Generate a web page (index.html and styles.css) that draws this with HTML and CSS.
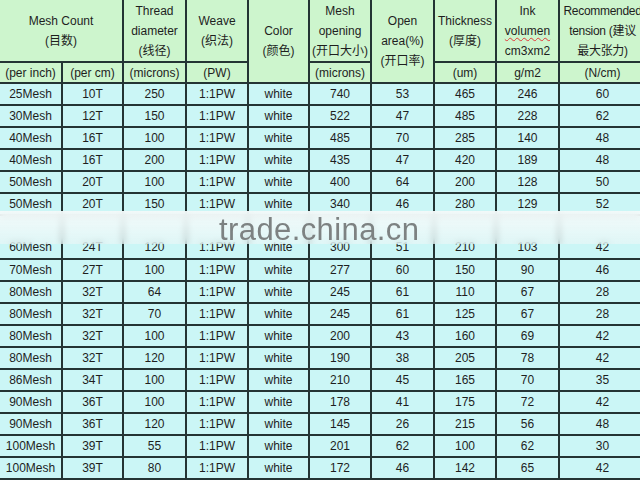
FILE: index.html
```html
<!DOCTYPE html>
<html>
<head>
<meta charset="utf-8">
<link rel="stylesheet" href="styles.css">
</head>
<body>
<div class="sheet">
<table class="grid">
<colgroup>
<col class="c1"><col class="c2"><col class="c3"><col class="c4"><col class="c5"><col class="c6"><col class="c7"><col class="c8"><col class="c9"><col class="c10">
</colgroup>
<thead>
<tr class="h1">
<th colspan="2">Mesh Count<br>(目数)</th>
<th>Thread<br>diameter<br>(线径)</th>
<th>Weave<br>(织法)</th>
<th rowspan="2" class="mid">Color<br>(颜色)</th>
<th>Mesh<br>opening<br>(开口大小)</th>
<th rowspan="2" class="mid">Open<br>area(%)<br>(开口率)</th>
<th>Thickness<br>(厚度)</th>
<th>Ink<br><span class="spell">volumen</span><br>cm3xm2</th>
<th class="rec">Recommended<br>tension (建议<br>最大张力)</th>
</tr>
<tr class="h2">
<th>(per inch)</th>
<th>(per cm)</th>
<th>(microns)</th>
<th>(PW)</th>
<th>(microns)</th>
<th>(um)</th>
<th>g/m2</th>
<th>(N/cm)</th>
</tr>
</thead>
<tbody>
<tr class="rb"><td>25Mesh</td><td>10T</td><td>250</td><td>1:1PW</td><td>white</td><td>740</td><td>53</td><td>465</td><td>246</td><td>60</td></tr>
<tr class="rb"><td>30Mesh</td><td>12T</td><td>150</td><td>1:1PW</td><td>white</td><td>522</td><td>47</td><td>485</td><td>228</td><td>62</td></tr>
<tr class="rb"><td>40Mesh</td><td>16T</td><td>100</td><td>1:1PW</td><td>white</td><td>485</td><td>70</td><td>285</td><td>140</td><td>48</td></tr>
<tr class="rb"><td>40Mesh</td><td>16T</td><td>200</td><td>1:1PW</td><td>white</td><td>435</td><td>47</td><td>420</td><td>189</td><td>48</td></tr>
<tr class="rb"><td>50Mesh</td><td>20T</td><td>100</td><td>1:1PW</td><td>white</td><td>400</td><td>64</td><td>200</td><td>128</td><td>50</td></tr>
<tr class="rb"><td>50Mesh</td><td>20T</td><td>150</td><td>1:1PW</td><td>white</td><td>340</td><td>46</td><td>280</td><td>129</td><td>52</td></tr>
<tr class="rw"><td>60Mesh</td><td>24T</td><td>120</td><td>1:1PW</td><td>white</td><td>300</td><td>51</td><td>210</td><td>103</td><td>42</td></tr>
<tr class="rb"><td>70Mesh</td><td>27T</td><td>100</td><td>1:1PW</td><td>white</td><td>277</td><td>60</td><td>150</td><td>90</td><td>46</td></tr>
<tr class="rb"><td>80Mesh</td><td>32T</td><td>64</td><td>1:1PW</td><td>white</td><td>245</td><td>61</td><td>110</td><td>67</td><td>28</td></tr>
<tr class="rb"><td>80Mesh</td><td>32T</td><td>70</td><td>1:1PW</td><td>white</td><td>245</td><td>61</td><td>125</td><td>67</td><td>28</td></tr>
<tr class="rb"><td>80Mesh</td><td>32T</td><td>100</td><td>1:1PW</td><td>white</td><td>200</td><td>43</td><td>160</td><td>69</td><td>42</td></tr>
<tr class="rb"><td>80Mesh</td><td>32T</td><td>120</td><td>1:1PW</td><td>white</td><td>190</td><td>38</td><td>205</td><td>78</td><td>42</td></tr>
<tr class="rb"><td>86Mesh</td><td>34T</td><td>100</td><td>1:1PW</td><td>white</td><td>210</td><td>45</td><td>165</td><td>70</td><td>35</td></tr>
<tr class="rb"><td>90Mesh</td><td>36T</td><td>100</td><td>1:1PW</td><td>white</td><td>178</td><td>41</td><td>175</td><td>72</td><td>42</td></tr>
<tr class="rb"><td>90Mesh</td><td>36T</td><td>120</td><td>1:1PW</td><td>white</td><td>145</td><td>26</td><td>215</td><td>56</td><td>48</td></tr>
<tr class="rb"><td>100Mesh</td><td>39T</td><td>55</td><td>1:1PW</td><td>white</td><td>201</td><td>62</td><td>100</td><td>62</td><td>30</td></tr>
<tr class="rb"><td>100Mesh</td><td>39T</td><td>80</td><td>1:1PW</td><td>white</td><td>172</td><td>46</td><td>142</td><td>65</td><td>42</td></tr>
</tbody>
</table>
<div class="band"></div>
<div class="mark">trade.china.cn</div>
</div>
</body>
</html>
```
FILE: styles.css
```css
html, body {
  margin: 0;
  padding: 0;
  background: #ffffff;
}
.sheet {
  position: relative;
  width: 640px;
  height: 480px;
  overflow: hidden;
  font-family: "Liberation Sans", Arial, "Noto Sans CJK SC", sans-serif;
  font-size: 12px;
  color: #1e1e1e;
}
.grid {
  border-collapse: collapse;
  table-layout: fixed;
  width: 647px;
  margin: -2px 0 0 -2px;
}
.c1 { width: 63px; }
.c2 { width: 61px; }
.c3 { width: 63px; }
.c4 { width: 62px; }
.c5 { width: 61px; }
.c6 { width: 62px; }
.c7 { width: 63px; }
.c8 { width: 62px; }
.c9 { width: 63px; }
.c10 { width: 87px; }
.grid th, .grid td {
  border: 2px solid #243434;
  padding: 0;
  text-align: center;
  white-space: nowrap;
  overflow: hidden;
}
.grid th {
  background: #cdf5cd;
  font-weight: normal;
  line-height: 20px;
  vertical-align: middle;
}
.h1 th { height: 61px; }
.h2 th { height: 19px; line-height: 18px; }
.grid td {
  background: #cbf6f6;
  line-height: 14px;
  vertical-align: middle;
}
.rw td { height: 44px; vertical-align: bottom; padding-bottom: 4px; box-sizing: border-box; }
.rb td { height: 20px; }
.rec { text-align: left; letter-spacing: -0.3px; }
.spell {
  text-decoration: underline wavy #e23a3a;
  text-decoration-thickness: 1px;
  text-underline-offset: 2px;
}
.band {
  position: absolute;
  left: 0;
  top: 211px;
  width: 640px;
  height: 33px;
  background: linear-gradient(to bottom, rgba(246,251,251,0.94), rgba(236,246,246,0.6));
  backdrop-filter: blur(3px);
}
.mark {
  position: absolute;
  left: 219px;
  top: 214px;
  font-family: "Liberation Sans", Arial, sans-serif;
  font-size: 31px;
  line-height: 31px;
  color: #7d8282;
  letter-spacing: 0.4px;
}
```
